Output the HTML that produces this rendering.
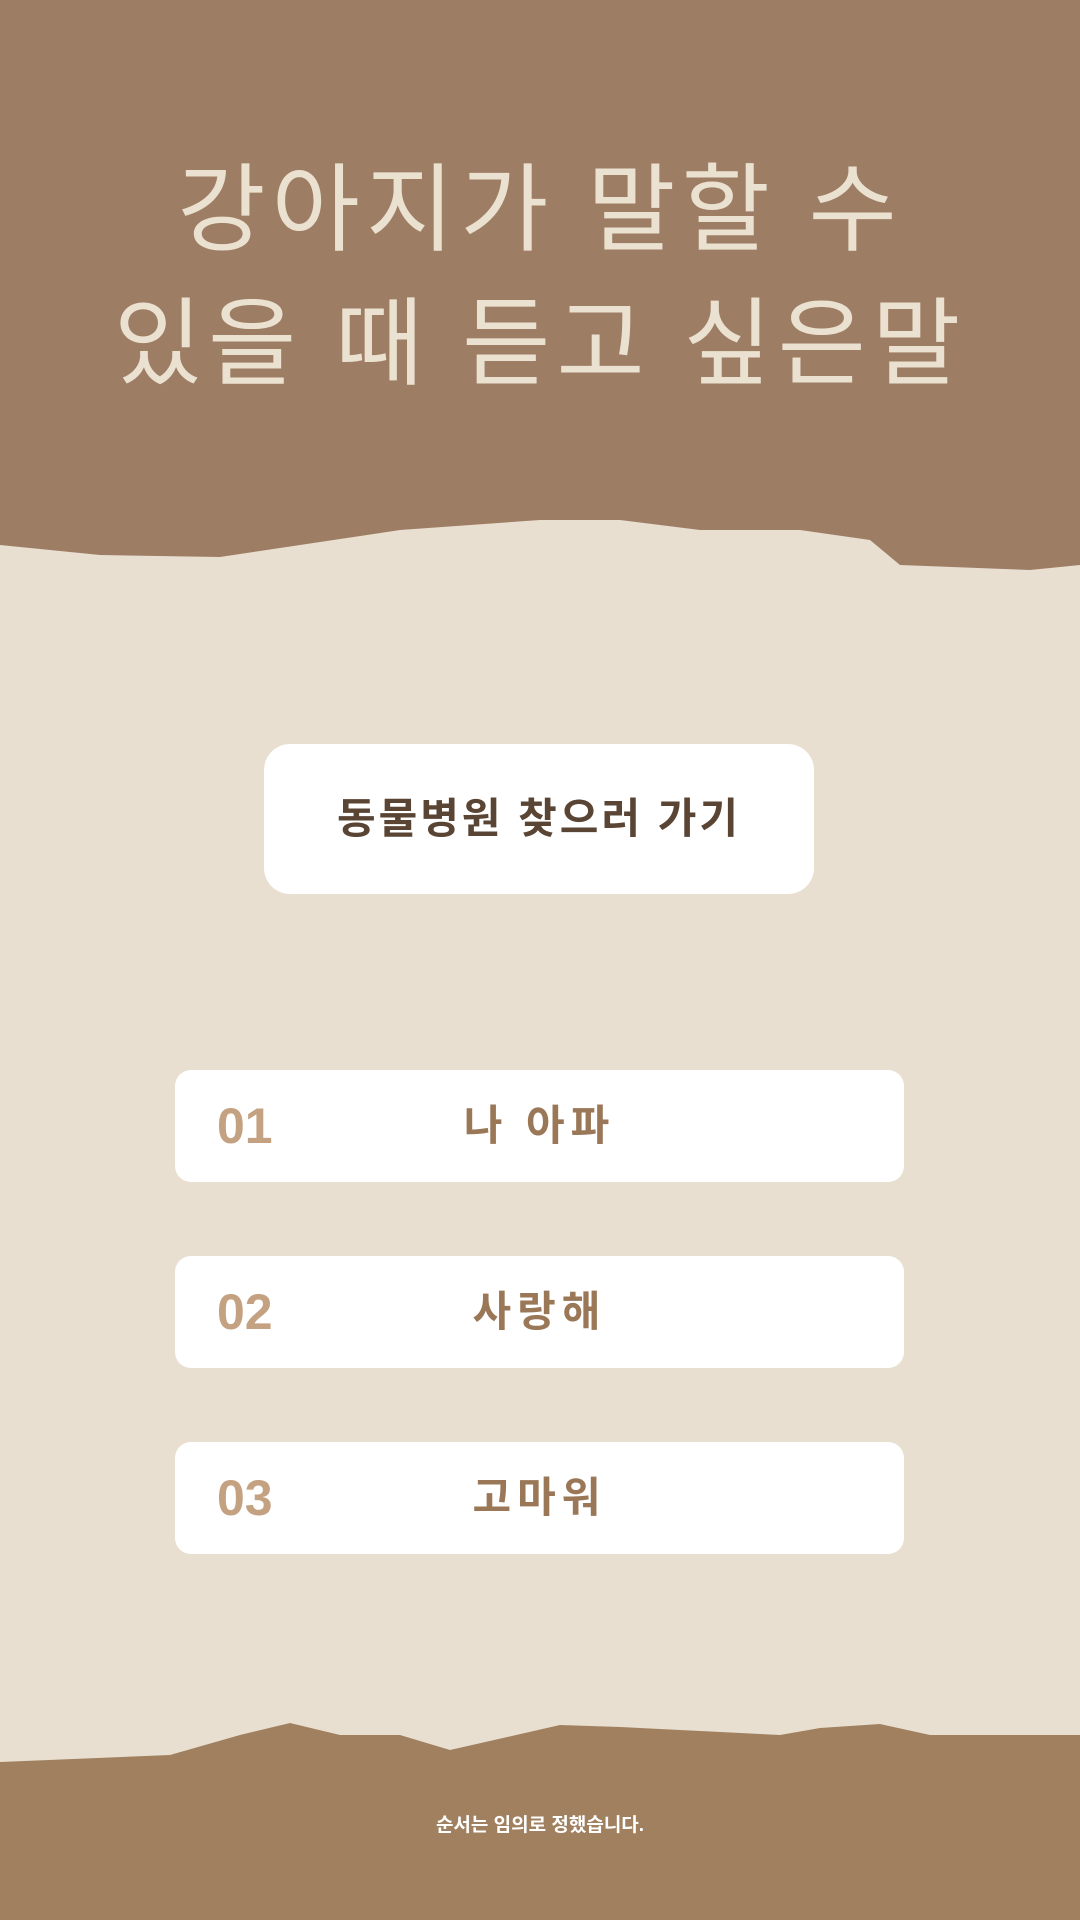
<!DOCTYPE html>
<html><head><meta charset="utf-8"><style>
*{margin:0;padding:0;box-sizing:border-box}
body{width:1080px;height:1920px;background:#e8dfd0;position:relative;overflow:hidden;font-family:"Liberation Sans","Noto Sans CJK KR","NanumGothic",sans-serif}
svg.bg{position:absolute;left:0;top:0}
.title{position:absolute;left:0;width:1080px;text-align:center;color:#ebe1d0;font-size:96px;font-weight:400;letter-spacing:6px;line-height:134px;top:144px}
.btn{position:absolute;left:264px;top:744px;width:550px;height:150px;background:#fff;border-radius:26px;text-align:center;line-height:150px;font-size:42px;font-weight:700;color:#5a4535;letter-spacing:3px}
.item{position:absolute;left:175px;width:729px;height:112px;background:#fff;border-radius:16px}
.num{position:absolute;left:42px;top:0;line-height:112px;font-size:50px;font-weight:700;color:#c4a281}
.lab{position:absolute;left:0;width:729px;text-align:center;top:0;line-height:112px;font-size:42px;font-weight:700;color:#9a7757;letter-spacing:6px}
.foot{position:absolute;left:0;width:1080px;text-align:center;top:1810px;color:#fff;font-size:19px;font-weight:700}
</style></head><body>
<svg class="bg" width="1080" height="1920">
<path d="M0 0H1080V565L1030 570L900 565L870 540L800 530L700 530L620 520L540 520L400 530L220 557L100 555L0 545Z" fill="#9e7d65"/>
<path d="M0 1762L170 1755L240 1735L290 1723L340 1735L400 1735L450 1750L560 1725L620 1727L780 1735L820 1728L880 1724L930 1735L1080 1735V1920H0Z" fill="#a0805f"/>
</svg>
<div class="title">강아지가 말할 수<br>있을 때 듣고 싶은말</div>
<div class="btn">동물병원 찾으러 가기</div>
<div class="item" style="top:1070px"><div class="num">01</div><div class="lab">나 아파</div></div>
<div class="item" style="top:1256px"><div class="num">02</div><div class="lab">사랑해</div></div>
<div class="item" style="top:1442px"><div class="num">03</div><div class="lab">고마워</div></div>
<div class="foot">순서는 임의로 정했습니다.</div>
</body></html>
